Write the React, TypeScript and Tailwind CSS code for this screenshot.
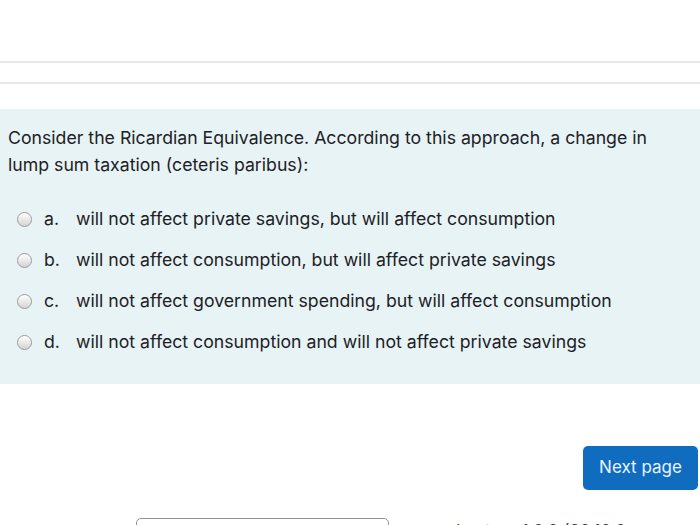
const options = [
  { key: 'a.', text: 'will not affect private savings, but will affect consumption' },
  { key: 'b.', text: 'will not affect consumption, but will affect private savings' },
  { key: 'c.', text: 'will not affect government spending, but will affect consumption' },
  { key: 'd.', text: 'will not affect consumption and will not affect private savings' },
]

function Radio() {
  return (
    <span className="w-[15px] h-[15px] rounded-full border border-[#9a9a9a] bg-gradient-to-b from-white to-[#d4d4d4] shadow-[inset_0_1px_1px_rgba(255,255,255,0.9)] shrink-0" />
  )
}

export default function App() {
  return (
    <div className="w-[700px] h-[525px] overflow-hidden bg-white text-[#1d2125] font-['Inter','Liberation_Sans',Arial,sans-serif]">
      {/* top separators */}
      <div className="h-[61px]" />
      <div className="h-[2px] bg-[#e6e6e6]" />
      <div className="h-[19px]" />
      <div className="h-[2px] bg-[#e8e8e8]" />
      <div className="h-[25px]" />

      {/* question panel */}
      <div className="h-[275px] bg-[#e7f3f5] pl-2 pt-[15px]">
        <p className="text-[17.7px] leading-[27px]">
          Consider the Ricardian Equivalence. According to this approach, a change in
          <br />
          lump sum taxation (ceteris paribus):
        </p>
        <div className="mt-[31px] flex flex-col gap-[20px]">
          {options.map((o) => (
            <label key={o.key} className="flex items-center h-[21px] text-[17.7px]">
              <span className="w-[9px]" />
              <Radio />
              <span className="ml-[12px] w-[32px]">{o.key}</span>
              <span>{o.text}</span>
            </label>
          ))}
        </div>
      </div>

      {/* next page */}
      <div className="flex justify-end pr-[2px] pt-[62px]">
        <button className="w-[115px] h-[44px] rounded-[5px] bg-[#0f6cbf] text-[#eaf4ff] text-[17px]">
          Next page
        </button>
      </div>

      {/* footer (cut off) */}
      <div className="flex items-start pt-[28px] h-[60px]">
        <div className="ml-[136px] w-[253px] h-[30px] rounded-[5px] border border-[#8f959e]" />
        <span className="ml-[67px] mt-[1px] text-[17px] text-[#444]">Lecture 1.0.0 (20.10.0</span>
      </div>
    </div>
  )
}
